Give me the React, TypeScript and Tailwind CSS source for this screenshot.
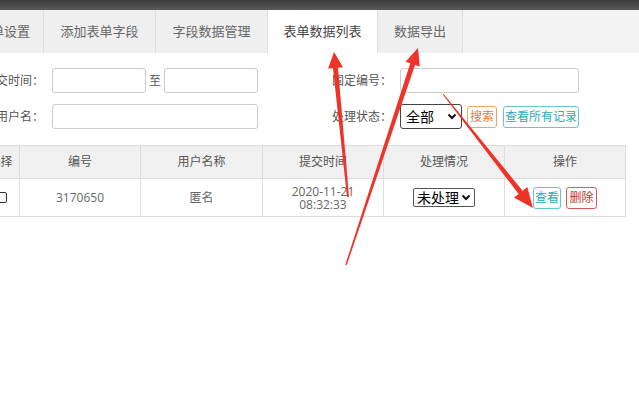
import React from 'react';

const tabs = [
  { label: '表单设置', w: 'w-[85px] pl-[6px]' },
  { label: '添加表单字段', w: 'w-[112px]' },
  { label: '字段数据管理', w: 'w-[112px]' },
  { label: '表单数据列表', w: 'w-[110px]', active: true },
  { label: '数据导出', w: 'w-[85px]' },
];

// tapered arrow polygon from tail to tip
const arrow = (x1: number, y1: number, x2: number, y2: number, tailW: number, shaftW: number, headL: number, headW: number) => {
  const L = Math.hypot(x2 - x1, y2 - y1);
  const ux = (x2 - x1) / L, uy = (y2 - y1) / L;
  const px = -uy, py = ux;
  const bx = x2 - ux * headL, by = y2 - uy * headL;
  const pts = [
    [x1 + px * tailW / 2, y1 + py * tailW / 2],
    [bx + px * shaftW / 2, by + py * shaftW / 2],
    [bx + px * headW / 2, by + py * headW / 2],
    [x2, y2],
    [bx - px * headW / 2, by - py * headW / 2],
    [bx - px * shaftW / 2, by - py * shaftW / 2],
    [x1 - px * tailW / 2, y1 - py * tailW / 2],
  ];
  return pts.map(p => p.map(n => n.toFixed(1)).join(',')).join(' ');
};

const Chevron = () => (
  <svg width="10" height="7" viewBox="0 0 10 7" className="ml-auto">
    <path d="M1.5 1.5 L5 5 L8.5 1.5" fill="none" stroke="#111" strokeWidth="2" />
  </svg>
);

export default function App() {
  return (
    <div className="relative w-[639px] h-[410px] overflow-hidden bg-white text-[#555] font-['Open_Sans','Noto_Sans_CJK_SC',sans-serif]">
      <div className="h-[10px] bg-gradient-to-b from-[#3e3e3e] to-[#585858]" />

      {/* tabs */}
      <div className="flex h-[43px] bg-[#f3f3f3] -ml-[41px]">
        {tabs.map(t => (
          <div
            key={t.label}
            className={`${t.w} flex items-center justify-center border-r border-[#dedede] text-[13px] ${t.active ? 'bg-white text-[#444]' : 'bg-[#efefef] text-[#666]'}`}
          >
            {t.label}
          </div>
        ))}
      </div>

      {/* filters */}
      <div className="mt-[15px] -ml-[41px] flex flex-col gap-[11px] text-[12px]">
        <div className="flex items-center h-[25px]">
          <div className="w-[85px] text-right">提交时间：</div>
          <div className="ml-[8px] w-[94px] h-[25px] border border-[#ccc] rounded-[3px]" />
          <div className="w-[18px] text-center">至</div>
          <div className="w-[94px] h-[25px] border border-[#ccc] rounded-[3px]" />
          <div className="w-[134px] text-right">固定编号：</div>
          <div className="ml-[8px] w-[179px] h-[25px] border border-[#ccc] rounded-[3px]" />
        </div>
        <div className="flex items-center h-[25px]">
          <div className="w-[85px] text-right">用户名：</div>
          <div className="ml-[8px] w-[206px] h-[25px] border border-[#ccc] rounded-[3px]" />
          <div className="w-[134px] text-right">处理状态：</div>
          <div className="ml-[8px] w-[62px] h-[25px] border border-[#444] rounded-[3px] flex items-center pl-[5px] pr-[4px] text-[14px] text-black">
            全部
            <Chevron />
          </div>
          <div className="ml-[5px] w-[30px] h-[22px] border border-[#f0a468] rounded-[3px] text-[#ee7b30] flex items-center justify-center">搜索</div>
          <div className="ml-[6px] w-[76px] h-[22px] border border-[#63c6d2] rounded-[3px] text-[#2fa8b8] flex items-center justify-center">查看所有记录</div>
        </div>
      </div>

      {/* table */}
      <table className="mt-[16px] -ml-[19px] table-fixed border-collapse text-[12px] text-[#666]">
        <colgroup>
          <col className="w-[38px]" />
          <col className="w-[121px]" />
          <col className="w-[122px]" />
          <col className="w-[121px]" />
          <col className="w-[121px]" />
          <col className="w-[121px]" />
        </colgroup>
        <thead>
          <tr className="h-[33px] bg-[#f0f0f0]">
            {['选择', '编号', '用户名称', '提交时间', '处理情况', '操作'].map(h => (
              <th key={h} className="border border-[#ddd] font-normal text-[#555] whitespace-nowrap">{h}</th>
            ))}
          </tr>
        </thead>
        <tbody>
          <tr className="h-[38px] text-center">
            <td className="border border-[#ddd]">
              <div className="mx-auto w-[11px] h-[11px] border border-[#333] rounded-[2px] translate-x-[1px]" />
            </td>
            <td className="border border-[#ddd]">3170650</td>
            <td className="border border-[#ddd]">匿名</td>
            <td className="border border-[#ddd] leading-[13px]">2020-11-21<br />08:32:33</td>
            <td className="border border-[#ddd]">
              <div className="mx-auto w-[62px] h-[19px] border border-[#555] rounded-[2px] flex items-center pl-[3px] pr-[3px] text-[14px] text-black">
                未处理
                <Chevron />
              </div>
            </td>
            <td className="border border-[#ddd]">
              <div className="flex justify-center gap-[5px]">
                <div className="w-[28px] h-[22px] border border-[#63c6d2] rounded-[3px] text-[#2fa8b8] flex items-center justify-center">查看</div>
                <div className="w-[31px] h-[22px] border border-[#d45a55] rounded-[3px] text-[#c9302c] flex items-center justify-center">删除</div>
              </div>
            </td>
          </tr>
        </tbody>
      </table>

      {/* annotation arrows */}
      <svg className="absolute inset-0 pointer-events-none" width="639" height="410" viewBox="0 0 639 410">
        <polygon points={arrow(348, 197, 334, 52, 2, 5, 16, 15)} fill="#ee3328" />
        <polygon points={arrow(346, 265, 418, 48, 1.5, 5, 17, 15)} fill="#ee3328" />
        <polygon points={arrow(443, 94, 533, 208, 1, 5, 20, 17)} fill="#ee3328" />
      </svg>
    </div>
  );
}
